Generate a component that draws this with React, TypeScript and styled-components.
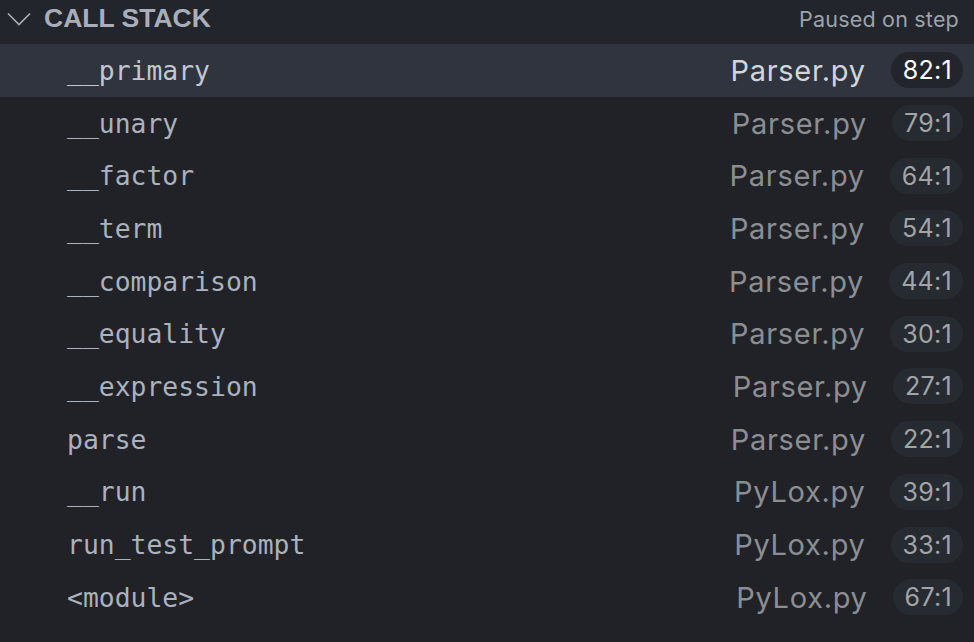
import React from "react";
import styled, { createGlobalStyle } from "styled-components";

const Global = createGlobalStyle`
  html, body { margin: 0; padding: 0; background: #202227; }
  body { width: 974px; height: 642px; overflow: hidden; }
`;

const Panel = styled.div`
  width: 974px;
  height: 642px;
  background: #202227;
  display: flex;
  flex-direction: column;
`;

const Header = styled.div`
  height: 44px;
  display: flex;
  align-items: center;
  padding: 0 15px 0 7px;
  background: #22252b;
  box-sizing: border-box;
`;

const Chevron = styled.svg`
  width: 24px;
  height: 14px;
  margin-right: 13px;
  margin-top: -7px;
  flex: none;
`;

const Title = styled.div`
  font-family: "Liberation Sans", Arial, sans-serif;
  font-weight: 700;
  font-size: 26.5px;
  color: #a9aeb9;
  margin-top: -8px;
  flex: 1;
`;

const Status = styled.div`
  font-family: Inter, "Liberation Sans", sans-serif;
  font-size: 21.5px;
  letter-spacing: 0.2px;
  color: #9ea2a9;
  margin-top: -7px;
`;

const List = styled.div`
  display: flex;
  flex-direction: column;
`;

const Row = styled.div<{ $active?: boolean }>`
  height: 52.7px;
  display: flex;
  align-items: center;
  padding: 0 11px 0 67px;
  background: ${(p) => (p.$active ? "#2f343e" : "transparent")};
  box-sizing: border-box;
`;

const Name = styled.div<{ $active?: boolean }>`
  flex: 1;
  font-family: "DejaVu Sans Mono", Menlo, monospace;
  font-size: 26.4px;
  color: ${(p) => (p.$active ? "#c3c7cf" : "#abb1bd")};
  white-space: nowrap;
`;

const File = styled.div<{ $active?: boolean }>`
  font-family: Inter, "Liberation Sans", sans-serif;
  font-size: 29px;
  letter-spacing: 0.7px;
  color: ${(p) => (p.$active ? "#d2d5da" : "#8c8e92")};
  margin-right: 25px;
  white-space: nowrap;
`;

const Badge = styled.div<{ $active?: boolean }>`
  height: 36px;
  padding: 0 11px 0 12px;
  border-radius: 18px;
  display: flex;
  align-items: center;
  font-family: Inter, "Liberation Sans", sans-serif;
  font-size: 25px;
  letter-spacing: 0.3px;
  color: ${(p) => (p.$active ? "#ffffff" : "#a3a4a6")};
  background: ${(p) => (p.$active ? "#22252b" : "#262a31")};
`;

const frames = [
  ["__primary", "Parser.py", "82:1"],
  ["__unary", "Parser.py", "79:1"],
  ["__factor", "Parser.py", "64:1"],
  ["__term", "Parser.py", "54:1"],
  ["__comparison", "Parser.py", "44:1"],
  ["__equality", "Parser.py", "30:1"],
  ["__expression", "Parser.py", "27:1"],
  ["parse", "Parser.py", "22:1"],
  ["__run", "PyLox.py", "39:1"],
  ["run_test_prompt", "PyLox.py", "33:1"],
  ["<module>", "PyLox.py", "67:1"],
];

export default function App() {
  return (
    <Panel>
      <Global />
      <Header>
        <Chevron viewBox="0 0 24 14">
          <path d="M1 1.5 L12 12.5 L23 1.5" fill="none" stroke="#a9aeb9" strokeWidth="1.6" />
        </Chevron>
        <Title>CALL STACK</Title>
        <Status>Paused on step</Status>
      </Header>
      <List>
        {frames.map(([n, f, l], i) => (
          <Row key={i} $active={i === 0}>
            <Name $active={i === 0}>{n}</Name>
            <File $active={i === 0}>{f}</File>
            <Badge $active={i === 0}>{l}</Badge>
          </Row>
        ))}
      </List>
    </Panel>
  );
}
